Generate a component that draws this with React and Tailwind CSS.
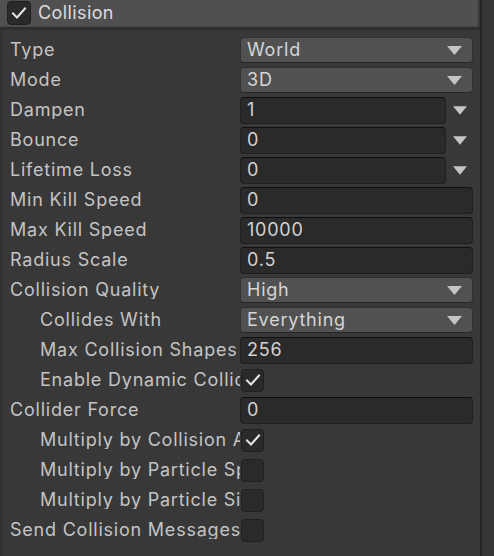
import React from "react";

const Check = ({ size = 18 }) => (
  <svg width={size} height={size} viewBox="0 0 18 18" fill="none">
    <path d="M3 9.5 L7 13.5 L15 4.5" stroke="#e4e4e4" strokeWidth="2" strokeLinecap="square" strokeLinejoin="miter" />
  </svg>
);

const Tri = () => (
  <svg width="15" height="9" viewBox="0 0 15 9">
    <path d="M0 0 H15 L7.5 9 Z" fill="#c4c4c4" />
  </svg>
);

const Dropdown = ({ value }) => (
  <div className="flex h-[26px] w-[233px] items-center justify-between rounded-[4px] border border-[#303030] border-b-[#262626] bg-[#515151] pl-[6px] pr-[10px] text-[#d6d6d6]">
    <span className="leading-none">{value}</span>
    <Tri />
  </div>
);

const TextField = ({ value, w = "w-[233px]" }) => (
  <div className={`flex h-[27px] ${w} items-center rounded-[4px] border border-[#1f1f1f] border-t-[#0f0f0f] bg-[#2a2a2a] pl-[6px] text-[#d2d2d2]`}>
    <span className="leading-none">{value}</span>
  </div>
);

const Curve = ({ value }) => (
  <div className="flex items-center">
    <TextField value={value} w="w-[206px]" />
    <div className="ml-[7px] flex w-[14px] items-center justify-center">
      <Tri />
    </div>
  </div>
);

const CheckBox = ({ checked }) => (
  <div className="ml-[1px] flex h-[23px] w-[23px] items-center justify-center rounded-[4px] border border-[#1f1f1f] bg-[#2a2a2a]">
    {checked && <Check />}
  </div>
);

const rows = [
  { label: "Type", kind: "dd", value: "World" },
  { label: "Mode", kind: "dd", value: "3D" },
  { label: "Dampen", kind: "curve", value: "1" },
  { label: "Bounce", kind: "curve", value: "0" },
  { label: "Lifetime Loss", kind: "curve", value: "0" },
  { label: "Min Kill Speed", kind: "text", value: "0" },
  { label: "Max Kill Speed", kind: "text", value: "10000" },
  { label: "Radius Scale", kind: "text", value: "0.5" },
  { label: "Collision Quality", kind: "dd", value: "High" },
  { label: "Collides With", kind: "dd", value: "Everything", indent: true },
  { label: "Max Collision Shapes", kind: "text", value: "256", indent: true },
  { label: "Enable Dynamic Colliders", kind: "cb", checked: true, indent: true },
  { label: "Collider Force", kind: "text", value: "0" },
  { label: "Multiply by Collision Angle", kind: "cb", checked: true, indent: true },
  { label: "Multiply by Particle Speed", kind: "cb", checked: false, indent: true },
  { label: "Multiply by Particle Size", kind: "cb", checked: false, indent: true },
  { label: "Send Collision Messages", kind: "cb", checked: false },
];

export default function App() {
  return (
    <div
      className="flex h-[556px] w-[494px] overflow-hidden bg-[#383838] text-[18px] tracking-[0.78px] text-[#c4c4c4]"
      style={{ fontFamily: "Inter, 'Noto Sans', sans-serif" }}
    >
      <div className="flex w-[480px] flex-col">
        <div className="flex h-[27px] w-[478px] items-center gap-[7px] border-b border-[#4a4a4a] bg-[#505050] pl-[7px]">
          <div className="flex h-[24px] w-[24px] items-center justify-center rounded-[4px] border border-[#1f1f1f] bg-[#2a2a2a]">
            <Check />
          </div>
          <span className="leading-none tracking-[0.4px] text-[#dcdcdc]">Collision</span>
        </div>
        <div className="h-[3px] w-[480px] bg-[#2e2e2e]" />
        <div className="flex flex-1 flex-col border-l-2 border-[#303030] pt-[5px]">
          {rows.map((r, i) => (
            <div key={i} className="flex h-[30px] items-center">
              <div
                className={`w-[238px] shrink-0 overflow-hidden whitespace-nowrap leading-none ${r.indent ? "pl-[38px]" : "pl-[8px]"}`}
              >
                {r.label}
              </div>
              {r.kind === "dd" && <Dropdown value={r.value} />}
              {r.kind === "text" && <TextField value={r.value} />}
              {r.kind === "curve" && <Curve value={r.value} />}
              {r.kind === "cb" && <CheckBox checked={r.checked} />}
            </div>
          ))}
        </div>
      </div>
      <div className="w-[2px] bg-[#242424]" />
      <div className="flex-1 bg-[#353535]" />
    </div>
  );
}
